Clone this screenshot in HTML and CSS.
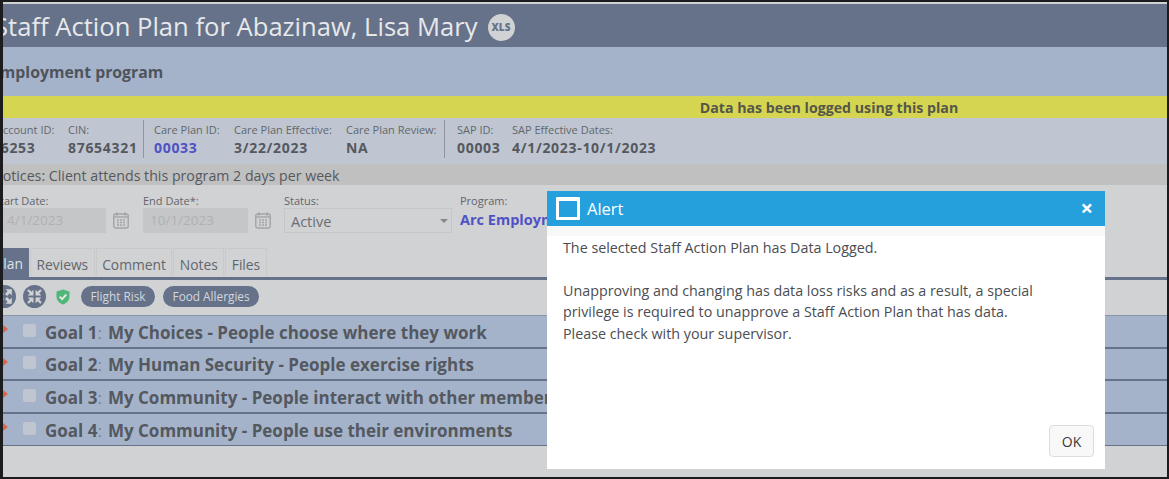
FILE: index.html
```html
<!DOCTYPE html>
<html lang="en">
  <head>
    <meta charset="UTF-8" />
    <meta name="viewport" content="width=device-width, initial-scale=1.0" />
    <title>Staff Action Plan</title>
    <link rel="stylesheet" href="styles.css">
  </head>
  <body>
    <div class="frame">
      <div class="page">
        <div class="title-bar">
          <h1>Staff Action Plan for Abazinaw, Lisa Mary</h1>
          <span class="xls">XLS</span>
        </div>
        <div class="program-bar">Employment program</div>
        <div class="logged-bar">Data has been logged using this plan</div>

        <div class="info-bar">
          <div class="info account"><label>Account ID:</label><b>16253</b></div>
          <div class="info cin"><label>CIN:</label><b>87654321</b></div>
          <div class="info care-id divided"><label>Care Plan ID:</label><b class="link">00033</b></div>
          <div class="info care-eff"><label>Care Plan Effective:</label><b>3/22/2023</b></div>
          <div class="info care-rev"><label>Care Plan Review:</label><b>NA</b></div>
          <div class="info sap-id divided"><label>SAP ID:</label><b>00003</b></div>
          <div class="info"><label>SAP Effective Dates:</label><b>4/1/2023-10/1/2023</b></div>
        </div>

        <div class="notices">Notices: Client attends this program 2 days per week</div>

        <div class="form-row">
          <div class="field date-field">
            <label class="start-label">Start Date:</label>
            <div class="date-wrap">
              <div class="input">4/1/2023</div>
              <svg class="cal" viewBox="0 0 16 17"><rect x="0.75" y="2" width="14.5" height="14" rx="2" fill="none" stroke="#a3a5a9" stroke-width="1.4"/><rect x="3" y="0.5" width="2" height="3" fill="#a3a5a9"/><rect x="11" y="0.5" width="2" height="3" fill="#a3a5a9"/><path d="M1 5h14" stroke="#a3a5a9" stroke-width="1.4"/><path d="M4 8h2M7 8h2M10 8h2M4 10.5h2M7 10.5h2M10 10.5h2M4 13h2M7 13h2M10 13h2" stroke="#a3a5a9" stroke-width="1.3"/></svg>
            </div>
          </div>
          <div class="field date-field end-field">
            <label>End Date*:</label>
            <div class="date-wrap">
              <div class="input">10/1/2023</div>
              <svg class="cal" viewBox="0 0 16 17"><rect x="0.75" y="2" width="14.5" height="14" rx="2" fill="none" stroke="#a3a5a9" stroke-width="1.4"/><rect x="3" y="0.5" width="2" height="3" fill="#a3a5a9"/><rect x="11" y="0.5" width="2" height="3" fill="#a3a5a9"/><path d="M1 5h14" stroke="#a3a5a9" stroke-width="1.4"/><path d="M4 8h2M7 8h2M10 8h2M4 10.5h2M7 10.5h2M10 10.5h2M4 13h2M7 13h2M10 13h2" stroke="#a3a5a9" stroke-width="1.3"/></svg>
            </div>
          </div>
          <div class="field status-field">
            <label>Status:</label>
            <div class="select">Active<span class="caret"></span></div>
          </div>
          <div class="field">
            <label>Program:</label>
            <b class="link program-name">Arc Employment</b>
          </div>
        </div>

        <div class="tabs">
          <div class="tab active">Plan</div>
          <div class="tab">Reviews</div>
          <div class="tab">Comment</div>
          <div class="tab">Notes</div>
          <div class="tab">Files</div>
        </div>

        <div class="tools">
          <svg class="round-icon" viewBox="0 0 22 22"><circle cx="11" cy="11" r="11" fill="#667289"/><path d="M4 10V4h6L8 6l2.500 2.500-2 2L6 8zM18 10V4h-6l2 2-2.500 2.500 2 2L16 8zM4 12v6h6l-2-2 2.500-2.500-2-2L6 14zM18 12v6h-6l2-2-2.500-2.500 2-2L16 14z" fill="#d1d2d4"/></svg>
          <svg class="round-icon" viewBox="0 0 22 22"><circle cx="11" cy="11" r="11" fill="#667289"/><path d="M10 10H4.500l2-2L4 5.500 5.500 4 8 6.500l2-2zM12 10h5.500l-2-2L18 5.500 16.500 4 14 6.500l-2-2zM10 12H4.500l2 2L4 16.500 5.500 18 8 15.500l2 2zM12 12h5.500l-2 2 2.500 2.500-1.500 1.500-2.500-2.500-2 2z" fill="#d1d2d4"/></svg>
          <svg class="shield" viewBox="0 0 14 16"><path d="M7 0.500l6.500 2v5c0 4-3 6.700-6.500 8-3.500-1.300-6.500-4-6.500-8v-5z" fill="#4fb878"/><path d="M3.700 7.600l2.400 2.500 4.200-4.600" fill="none" stroke="#e4e6e6" stroke-width="2"/></svg>
          <span class="pill flight">Flight Risk</span>
          <span class="pill">Food Allergies</span>
        </div>

        <div class="goals">
          <div class="goal"><i class="arrow"></i><i class="check"></i><b>Goal 1</b><span class="colon">:</span><b>My Choices - People choose where they work</b></div>
          <div class="goal"><i class="arrow"></i><i class="check"></i><b>Goal 2</b><span class="colon">:</span><b>My Human Security - People exercise rights</b></div>
          <div class="goal"><i class="arrow"></i><i class="check"></i><b>Goal 3</b><span class="colon">:</span><b>My Community - People interact with other members</b></div>
          <div class="goal last"><i class="arrow"></i><i class="check"></i><b>Goal 4</b><span class="colon">:</span><b>My Community - People use their environments</b></div>
        </div>
      </div>

      <div class="modal">
        <div class="modal-head">
          <span class="window-icon"></span>
          <span class="modal-title">Alert</span>
          <span class="close">×</span>
        </div>
        <div class="modal-body">
          <p>The selected Staff Action Plan has Data Logged.</p>
          <p>Unapproving and changing has data loss risks and as a result, a special<br>privilege is required to unapprove a Staff Action Plan that has data.<br>Please check with your supervisor.</p>
        </div>
        <div class="modal-foot"><button>OK</button></div>
      </div>
    </div>
  </body>
</html>
```

FILE: styles.css
```css
* {
  box-sizing: border-box;
}
html,
body {
  margin: 0;
  height: 100%;
}
body {
  font-family: "Open Sans", sans-serif;
  color: #55585e;
  overflow: hidden;
}
.frame {
  position: relative;
  height: 479px;
  background: #d1d2d4;
  border-style: solid;
  border-color: #1c1c1e;
  border-width: 2px 2px 2px 3px;
  overflow: hidden;
}
.page {
  padding-top: 2px;
  background: #d1d2d4;
  height: 100%;
}
.title-bar {
  height: 43px;
  margin-left: -12px;
  background: #667289;
  display: flex;
  align-items: center;
  gap: 10px;
  color: #e6e8eb;
}
h1 {
  margin: 2px 0 0;
  font-size: 25.6px;
  font-weight: 400;
  white-space: nowrap;
  padding-left: 3px;
}
.xls {
  width: 27px;
  height: 27px;
  border-radius: 50%;
  background: #d1d2d4;
  color: #667289;
  font-size: 10px;
  font-weight: 800;
  display: flex;
  align-items: center;
  justify-content: center;
  margin-top: 3px;
}
.program-bar {
  height: 49px;
  line-height: 51px;
  margin-left: -12px;
  background: #a4b3ca;
  font-size: 15.8px;
  font-weight: 700;
  color: #4f535c;
}
.logged-bar {
  height: 22px;
  line-height: 24px;
  background: #d5d552;
  text-align: center;
  padding-left: 488px;
  font-size: 14.2px;
  font-weight: 700;
  color: #55574a;
}
.info-bar {
  height: 46px;
  background: #bfc6d1;
  display: flex;
  padding-top: 2px;
  margin-left: -7px;
}
.info {
  display: flex;
  flex-direction: column;
  padding-top: 2px;
  white-space: nowrap;
}
.info label {
  font-size: 11px;
  line-height: 16px;
  color: #62666d;
}
.info b {
  font-size: 14px;
  line-height: 19px;
  letter-spacing: 0.7px;
}
.account {
  width: 72px;
}
.account b {
  margin-left: -4px;
}
.cin {
  width: 75px;
}
.divided {
  border-left: 1px solid #8f96a3;
  padding-left: 10px;
  height: 38px;
}
.care-id {
  width: 91px;
}
.care-eff {
  width: 112px;
}
.care-rev {
  width: 98px;
}
.sap-id {
  width: 68px;
  padding-left: 12px;
}
.link {
  color: #4f52c4;
}
.notices {
  height: 21px;
  line-height: 23px;
  margin-left: -11px;
  background: #c0c0c0;
  font-size: 14.2px;
  white-space: nowrap;
}
.form-row {
  display: flex;
  height: 63px;
  padding-top: 8px;
}
.field label {
  display: block;
  font-size: 11px;
  line-height: 15px;
  color: #62666d;
}
.field .start-label {
  margin-left: -9px;
}
.date-field {
  width: 140px;
}
.end-field {
  width: 141px;
}
.date-wrap {
  display: flex;
  align-items: center;
  gap: 7px;
}
.input {
  flex: none;
  width: 105px;
  height: 25px;
  line-height: 25px;
  background: #c5c6c8;
  padding-left: 7px;
  font-size: 13.5px;
  color: #b0b1b4;
}
.form-row .date-field:first-child .input {
  width: 103px;
  padding-left: 4px;
}
.cal {
  width: 16px;
  height: 17px;
}
.status-field {
  width: 176px;
}
.select {
  position: relative;
  width: 168px;
  height: 25px;
  line-height: 26px;
  border: 1px solid #c5c6c8;
  padding-left: 6px;
  font-size: 14.5px;
  color: #6b6e74;
}
.caret {
  position: absolute;
  right: 3px;
  top: 10px;
  border: 4px solid transparent;
  border-top-color: #85878b;
}
.program-name {
  font-size: 14.5px;
  line-height: 17px;
  white-space: nowrap;
}
.tabs {
  display: flex;
  gap: 1px;
  height: 32px;
  border-bottom: 3px solid #667289;
  font-size: 13.8px;
  margin-left: -1px;
}
.tab {
  padding: 0 5.5px;
  line-height: 31px;
  border: 1px solid #c8c9cb;
  border-bottom: 0;
  white-space: nowrap;
  color: #62666d;
}
.tab.active {
  margin-left: -8px;
  width: 35px;
  background: #667289;
  color: #dfe2e6;
  padding-left: 1px;
  border: 0;
}
.tools {
  display: flex;
  align-items: center;
  height: 35px;
  margin-left: -10px;
  padding-bottom: 2px;
}
.round-icon {
  width: 23px;
  height: 23px;
  margin-right: 7px;
}
.shield {
  width: 14px;
  height: 16px;
  margin: 1px 11px 0 3px;
}
.pill {
  height: 21px;
  line-height: 20px;
  padding: 0 9.5px;
  margin-right: 8px;
  border-radius: 11px;
  background: #667289;
  color: #d4d8de;
  font-size: 11.8px;
  white-space: nowrap;
}
.goals {
  border-top: 1px solid #8a94a8;
}
.goal {
  height: 32.5px;
  background: #a4b3ca;
  border-bottom: 2px solid #667289;
  display: flex;
  align-items: center;
  font-size: 17px;
  white-space: nowrap;
  color: #54585f;
  padding-top: 2px;
}
.goal.last {
  border-bottom-width: 1px;
}
.arrow {
  width: 0;
  height: 0;
  margin-top: -6px;
  border: 4px solid transparent;
  border-left: 5px solid #d9674a;
  border-right: 0;
  margin-right: 15px;
}
.check {
  width: 13px;
  height: 13px;
  margin-top: -4px;
  margin-right: 9px;
  background: #bfc6d1;
  border-radius: 2px;
}
.colon {
  margin-right: 6px;
  font-weight: 400;
  color: #7b828d;
}
/* dialog sits over the dimmed page */
.modal {
  position: absolute;
  left: 544px;
  top: 189px;
  width: 558px;
  height: 278px;
  background: #fff;
  display: flex;
  flex-direction: column;
  color: #4b4d52;
}
.modal-head {
  height: 35px;
  background: #25a0dc;
  color: #fff;
  display: flex;
  align-items: center;
  padding: 0 10px 0 9px;
  flex: none;
}
.window-icon {
  width: 24px;
  height: 23px;
  border: 3px solid #fff;
  border-top-width: 4px;
  border-radius: 1px;
  margin-right: 7px;
}
.modal-title {
  font-size: 16.5px;
  flex: 1;
}
.close {
  font-size: 22px;
  font-weight: 700;
  line-height: 1;
  margin: 0 2px 4px 0;
}
.modal-body {
  flex: 1;
  padding: 1px 16px 0;
  border-top: 10px solid #f8f8f8;
  font-size: 14.3px;
  line-height: 21.4px;
}
.modal-body p {
  margin: 0 0 21.4px;
}
.modal-foot {
  display: flex;
  justify-content: flex-end;
  padding: 0 11px 12px;
}
button {
  width: 45px;
  height: 32px;
  font-family: inherit;
  font-size: 14px;
  color: #3a3a3a;
  background: #f8f8f8;
  border: 1px solid #ddd;
  border-radius: 4px;
  padding: 0;
}
```
